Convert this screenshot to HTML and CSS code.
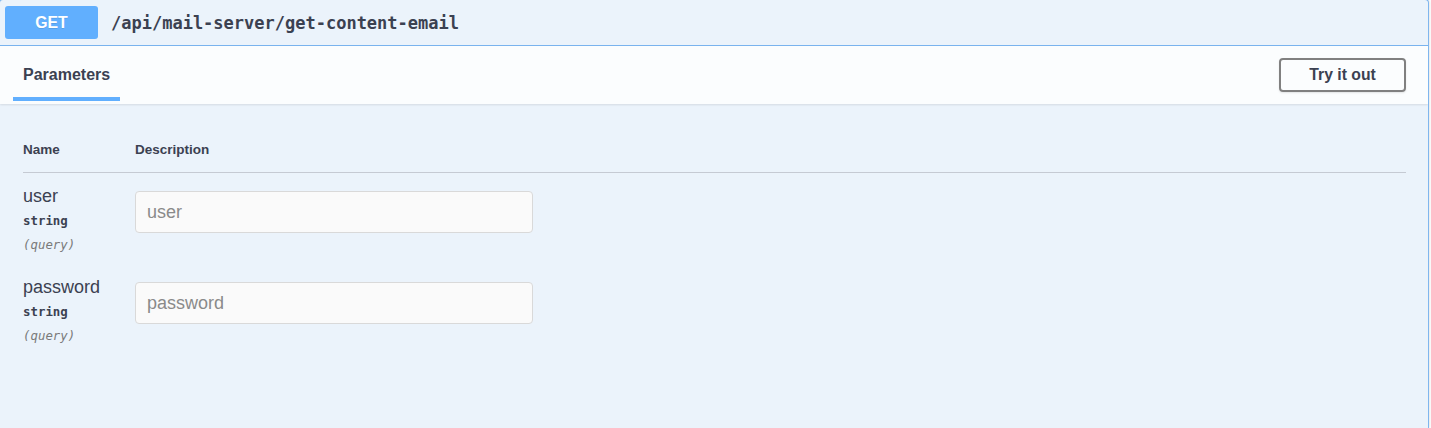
FILE: index.html
```html
<!DOCTYPE html>
<html>
<head>
<meta charset="utf-8">
<link rel="stylesheet" href="styles.css">
</head>
<body>
<div class="opblock">
  <div class="summary">
    <span class="method">GET</span>
    <span class="path">/api/mail-server/get-content-email</span>
  </div>
  <div class="section-header">
    <div class="tab"><span>Parameters</span></div>
    <button class="try-btn">Try it out</button>
  </div>
  <div class="params">
    <div class="params-head">
      <div class="col-name">Name</div>
      <div class="col-desc">Description</div>
    </div>
    <div class="param-row">
      <div class="col-name">
        <div class="p-name">user</div>
        <div class="p-type">string</div>
        <div class="p-in">(query)</div>
      </div>
      <div class="col-desc">
        <input class="p-input" type="text" placeholder="user">
      </div>
    </div>
    <div class="param-row">
      <div class="col-name">
        <div class="p-name">password</div>
        <div class="p-type">string</div>
        <div class="p-in">(query)</div>
      </div>
      <div class="col-desc">
        <input class="p-input" type="text" placeholder="password">
      </div>
    </div>
  </div>
</div>
</body>
</html>
```

FILE: styles.css
```css
html, body {
  margin: 0;
  padding: 0;
  background: #ffffff;
  overflow: hidden;
}
body {
  font-family: "Liberation Sans", Arial, sans-serif;
  color: #3b4151;
  height: 428px;
}
.opblock {
  box-sizing: border-box;
  width: 1430px;
  height: 429px;
  margin: -1px 0 0 -1px;
  border: 1px solid #7fb6ee;
  border-bottom: 0;
  border-radius: 4px 4px 0 0;
  background: #ebf3fb;
  box-shadow: 0 0 3px rgba(0, 0, 0, 0.19);
  overflow: hidden;
}
.summary {
  display: flex;
  align-items: center;
  padding: 6px 5px;
  border-bottom: 1px solid #7ab4ef;
}
.method {
  box-sizing: border-box;
  width: 93px;
  height: 33px;
  display: flex;
  align-items: center;
  justify-content: center;
  background: #61affe;
  color: #ffffff;
  border-radius: 3px;
  font-weight: 700;
  font-size: 15.75px;
  text-shadow: 0 1px 0 rgba(0, 0, 0, 0.1);
}
.path {
  margin-left: 13px;
  font-family: "DejaVu Sans Mono", monospace;
  font-size: 17px;
  font-weight: 700;
  color: #3b4151;
}
.section-header {
  height: 58px;
  display: flex;
  align-items: center;
  justify-content: space-between;
  padding: 0 22px 0 13px;
  background: rgba(255, 255, 255, 0.8);
  box-shadow: 0 1px 2px rgba(0, 0, 0, 0.1);
}
.tab {
  position: relative;
  align-self: stretch;
  display: flex;
  align-items: center;
  padding: 0 10px;
  font-size: 16px;
  font-weight: 700;
}
.tab::after {
  content: "";
  position: absolute;
  left: 0;
  right: 0;
  bottom: 3px;
  height: 4px;
  background: #61affe;
}
.try-btn {
  box-sizing: border-box;
  width: 127px;
  height: 34px;
  border: 2px solid #808080;
  border-radius: 4px;
  background: transparent;
  font-family: "Liberation Sans", Arial, sans-serif;
  font-size: 15.75px;
  font-weight: 700;
  color: #3b4151;
  box-shadow: 0 1px 2px rgba(0, 0, 0, 0.1);
  padding: 0;
}
.params {
  padding: 0 22px 0 23px;
}
.params-head {
  display: flex;
  padding: 38px 0 14px;
  border-bottom: 1px solid #c5cad3;
  font-size: 13.5px;
  font-weight: 700;
  line-height: 16px;
}
.col-name {
  width: 112px;
  flex: none;
}
.col-desc {
  flex: 1;
}
.param-row {
  display: flex;
  padding: 13px 0 12px;
}
.p-name {
  font-size: 18px;
  line-height: 21px;
}
.p-type {
  font-family: "DejaVu Sans Mono", monospace;
  font-size: 12.4px;
  font-weight: 700;
  line-height: 15px;
  padding: 6px 0 9px;
}
.p-in {
  font-family: "DejaVu Sans Mono", monospace;
  font-size: 12.4px;
  font-style: italic;
  line-height: 15px;
  color: #7a7a7a;
}
.p-input {
  box-sizing: border-box;
  display: block;
  margin-top: 5px;
  width: 398px;
  height: 42px;
  padding: 0 11px;
  border: 1px solid #d9d9d9;
  border-radius: 4px;
  background: #fafafa;
  font-family: "Liberation Sans", Arial, sans-serif;
  font-size: 18px;
  color: #3b4151;
  outline: none;
}
.p-input::placeholder {
  color: #8a8a8a;
}
```
